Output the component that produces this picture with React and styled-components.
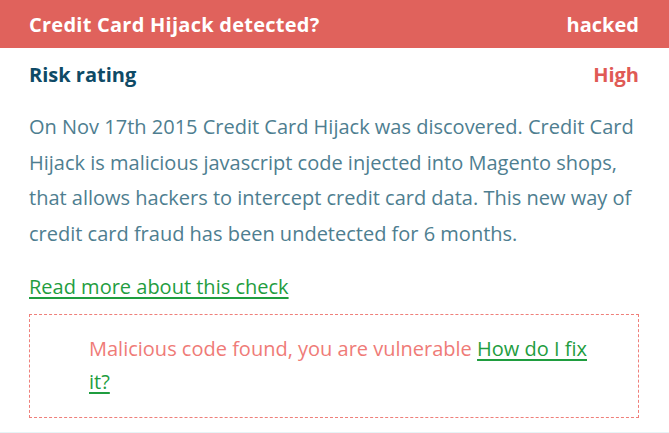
import React from "react";
import styled, { createGlobalStyle } from "styled-components";

const GlobalStyle = createGlobalStyle`
  body {
    margin: 0;
    background: #ffffff;
    font-family: "Open Sans", "Liberation Sans", sans-serif;
  }
`;

const Card = styled.div`
  width: 669px;
  height: 433px;
  box-sizing: border-box;
  border-bottom: 1px solid #e6f4f6;
  background: #ffffff;
`;

const Header = styled.div`
  display: flex;
  justify-content: space-between;
  align-items: center;
  height: 48px;
  padding: 0 30px 0 29px;
  background: #e0625c;
  color: #ffffff;
  font-size: 20px;
  font-weight: 700;
`;

const HeaderTitle = styled.span`
  letter-spacing: 0.25px;
`;

const Body = styled.div`
  padding: 0 30px 0 29px;
`;

const RiskRow = styled.div`
  display: flex;
  justify-content: space-between;
  padding-top: 13px;
  line-height: 28px;
  font-size: 20px;
  font-weight: 700;
`;

const RiskLabel = styled.span`
  color: #0e4a66;
`;

const RiskValue = styled.span`
  color: ${(p) => p.color};
`;

const Description = styled.p`
  margin: 20px 0 0;
  font-size: 20px;
  line-height: 35.5px;
  color: #4e7e90;
`;

const Link = styled.a`
  color: #1f9d3f;
  text-decoration: underline;
  text-decoration-thickness: 2px;
  text-underline-offset: 3px;
`;

const ReadMore = styled.div`
  margin-top: 18px;
  font-size: 20px;
  line-height: 35px;
`;

const Notice = styled.div`
  margin-top: 10px;
  border: 1px dashed #ef7f7a;
  padding: 17px 40px 19px 59px;
  font-size: 20px;
  line-height: 33px;
  color: #ef7b77;
`;

export default function App() {
  return (
    <Card>
      <GlobalStyle />
      <Header>
        <HeaderTitle>Credit Card Hijack detected?</HeaderTitle>
        <span>hacked</span>
      </Header>
      <Body>
        <RiskRow>
          <RiskLabel>Risk rating</RiskLabel>
          <RiskValue color="#e05a55">High</RiskValue>
        </RiskRow>
        <Description>
          On Nov 17th 2015 Credit Card Hijack was discovered. Credit Card
          Hijack is malicious javascript code injected into Magento shops,
          that allows hackers to intercept credit card data. This new way of
          credit card fraud has been undetected for 6 months.
        </Description>
        <ReadMore>
          <Link href="#">Read more about this check</Link>
        </ReadMore>
        <Notice>
          Malicious code found, you are vulnerable <Link href="#">How do I fix it?</Link>
        </Notice>
      </Body>
    </Card>
  );
}
